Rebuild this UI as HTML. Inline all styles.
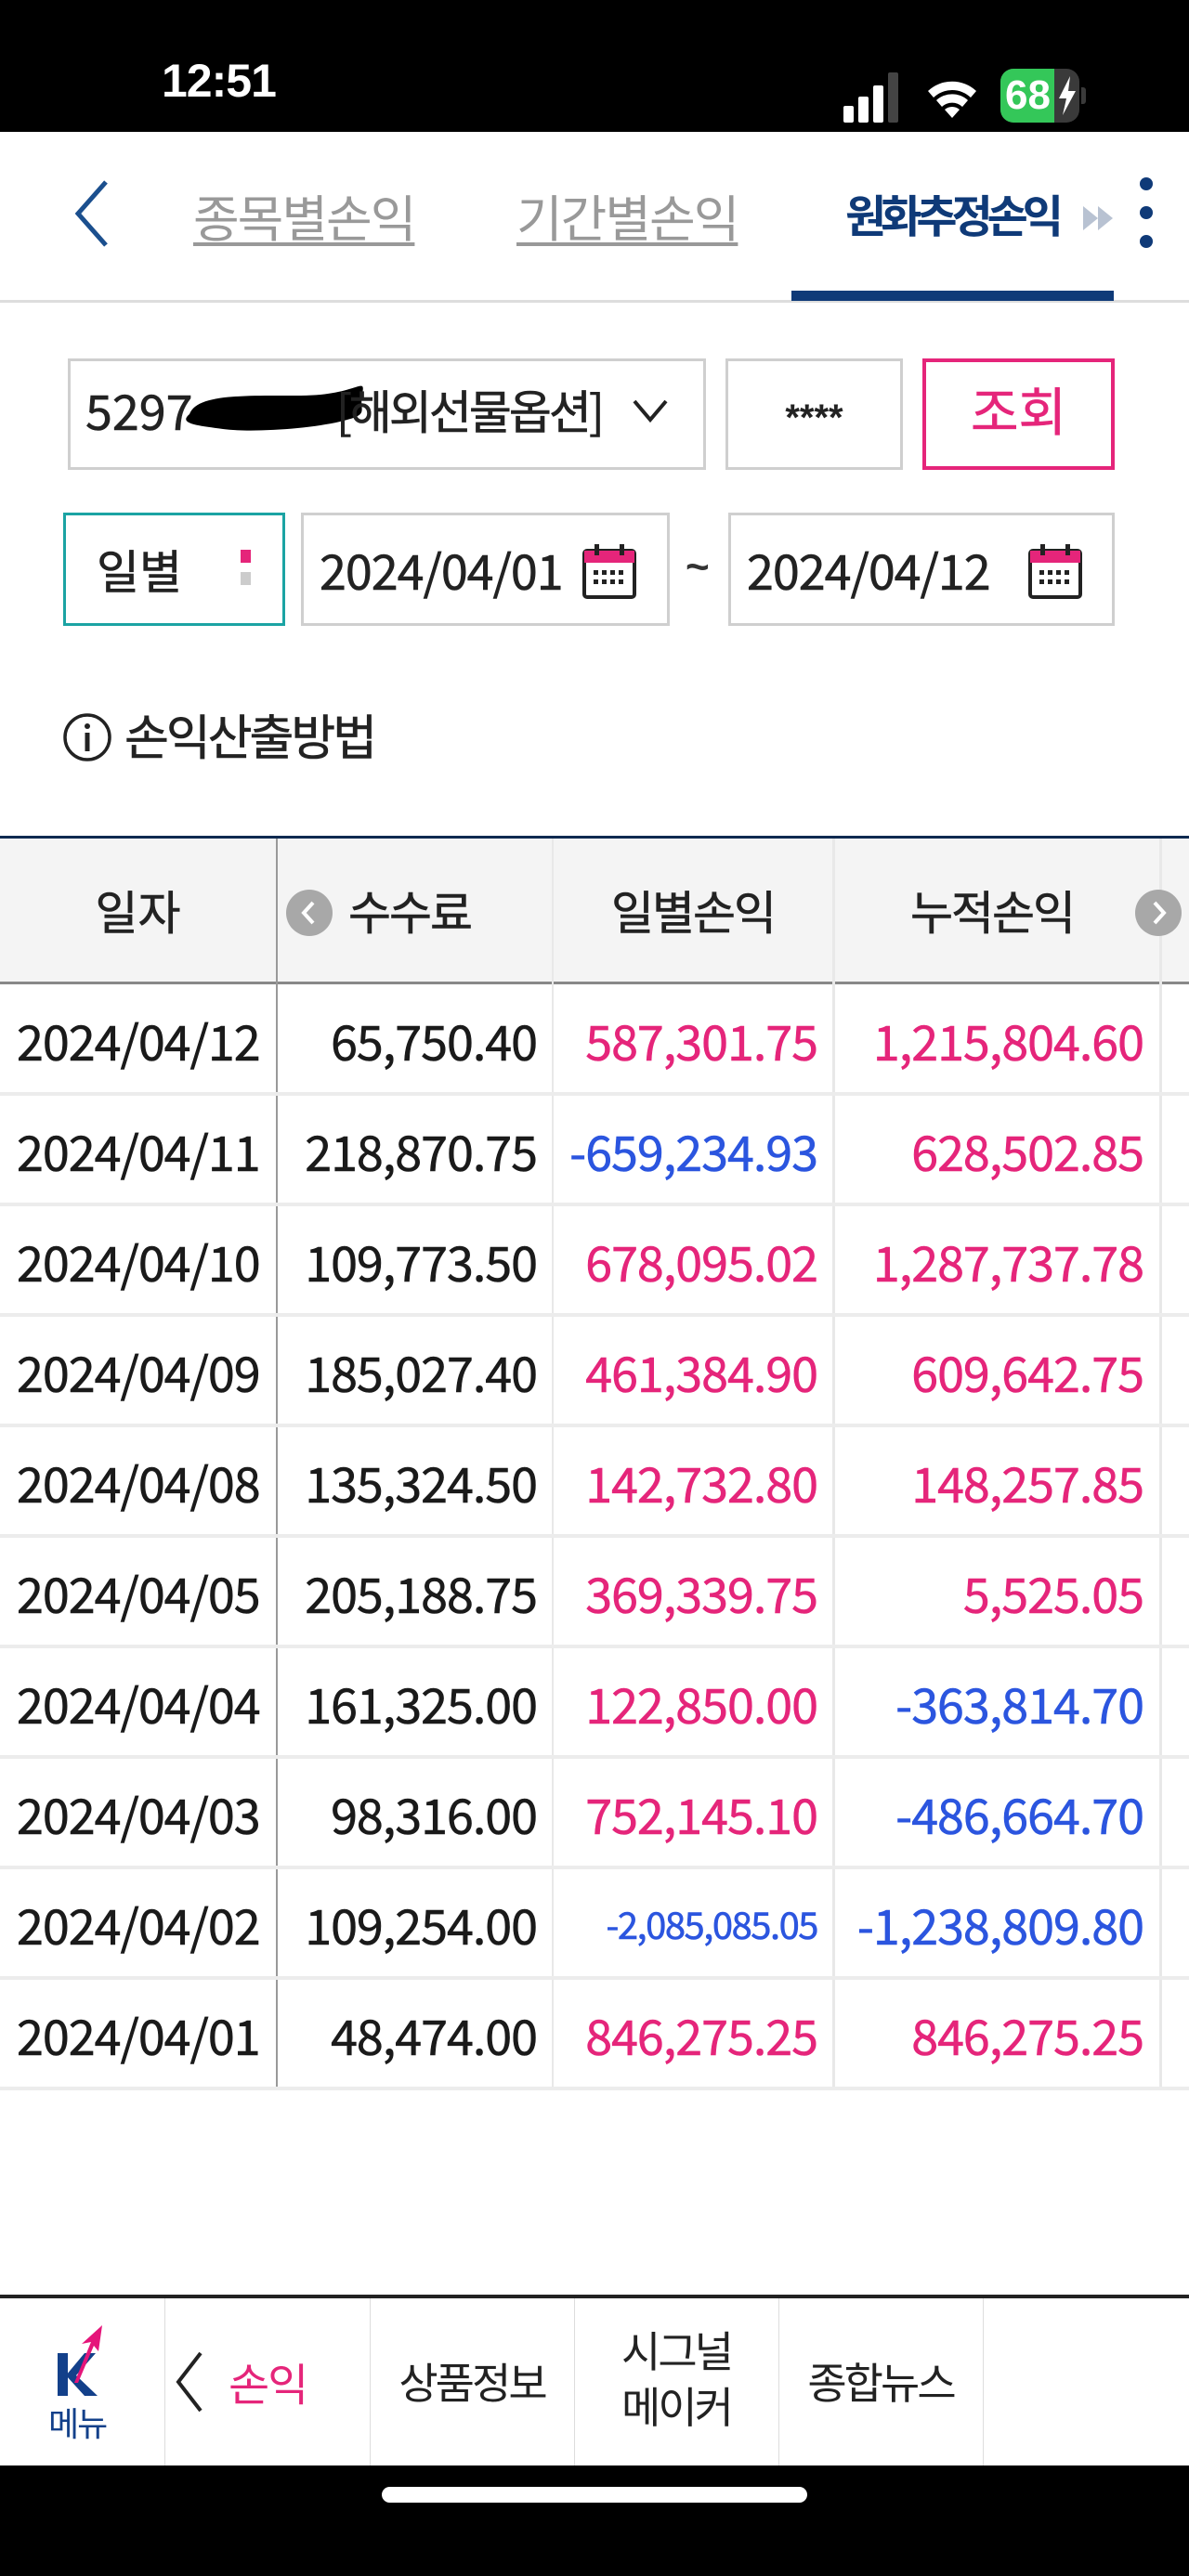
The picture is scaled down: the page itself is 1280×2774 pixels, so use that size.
<!DOCTYPE html>
<html><head><meta charset="utf-8">
<style>
*{margin:0;padding:0;box-sizing:border-box}
body{width:1280px;height:2774px;position:relative;background:#fff;font-family:"Liberation Sans","Noto Sans CJK KR",sans-serif;overflow:hidden}
.a{position:absolute}
.k{font-family:"Noto Sans CJK KR",sans-serif}
.box{position:absolute;border:3px solid #cfcfcf;background:#fff}
.t{position:absolute;font-family:"Noto Sans CJK KR",sans-serif;font-size:52px;line-height:119px;height:119px;white-space:nowrap;-webkit-text-stroke:0.6px currentColor}
.p{color:#e5257a}.b{color:#2b55df}.d{color:#1a1a1a}
</style></head><body>
<!-- status bar -->
<div class="a" style="left:0;top:0;width:1280px;height:142px;background:#000"></div>
<div class="a" style="left:174px;top:58px;color:#fff;font-size:50px;font-weight:bold;letter-spacing:-1px">12:51</div>
<div class="a" style="left:908px;top:132px;width:11px;height:18px;background:#fff;border-radius:2px;top:114px"></div>
<div class="a" style="left:924px;top:104px;width:11px;height:28px;background:#fff;border-radius:2px"></div>
<div class="a" style="left:940px;top:92px;width:11px;height:40px;background:#fff;border-radius:2px"></div>
<div class="a" style="left:956px;top:78px;width:11px;height:54px;background:#444;border-radius:2px"></div>
<svg class="a" style="left:995px;top:76px" width="60" height="58" viewBox="0 0 60 58"><path d="M4 22a38 38 0 0 1 52 0l-6 7a29 29 0 0 0-40 0z M13 32a25 25 0 0 1 34 0l-6 7a16 16 0 0 0-22 0z M22 42a12 12 0 0 1 16 0l-8 9z" fill="#fff"/></svg>
<div class="a" style="left:1077px;top:74px;width:85px;height:58px;background:#3a3a3a;border-radius:14px;overflow:hidden"><div style="width:58px;height:58px;background:#34c759"></div></div>
<div class="a" style="left:1082px;top:74px;color:#fff;font-size:44px;font-weight:bold;line-height:58px">68</div>
<svg class="a" style="left:1138px;top:82px" width="22" height="42" viewBox="0 0 22 42"><path d="M14 0L2 24h8L6 42 20 16h-8z" fill="#fff"/></svg>
<div class="a" style="left:1164px;top:94px;width:5px;height:18px;background:#3a3a3a;border-radius:0 3px 3px 0"></div>

<!-- tabs -->
<svg class="a" style="left:76px;top:192px" width="44" height="76" viewBox="0 0 44 76"><path d="M38 4L8 38l30 34" fill="none" stroke="#1b4f8e" stroke-width="5"/></svg>
<div class="a k" style="left:208px;top:192px;font-size:54px;color:#999;text-decoration:underline;text-decoration-thickness:4px;text-underline-offset:6px;letter-spacing:-2px">종목별손익</div>
<div class="a k" style="left:556px;top:192px;font-size:54px;color:#999;text-decoration:underline;text-decoration-thickness:4px;text-underline-offset:6px;letter-spacing:-2px">기간별손익</div>
<div class="a k" style="left:910px;top:194px;font-size:48px;color:#0f3a78;font-weight:bold;letter-spacing:-6px">원화추정손익</div>
<svg class="a" style="left:1166px;top:220px" width="34" height="30" viewBox="0 0 34 30"><path d="M0 2l16 13L0 28z M16 2l16 13-16 13z" fill="#b8c2d2"/></svg>
<div class="a" style="left:1227px;top:191px;width:14px;height:14px;border-radius:7px;background:#0f3a78"></div>
<div class="a" style="left:1227px;top:222px;width:14px;height:14px;border-radius:7px;background:#0f3a78"></div>
<div class="a" style="left:1227px;top:253px;width:14px;height:14px;border-radius:7px;background:#0f3a78"></div>
<div class="a" style="left:0;top:323px;width:1280px;height:3px;background:#ddd"></div>
<div class="a" style="left:852px;top:313px;width:347px;height:11px;background:#0f3a78"></div>

<!-- row 1 -->
<div class="box" style="left:73px;top:386px;width:687px;height:120px"></div>
<div class="a k" style="left:92px;top:406px;font-size:52px;line-height:70px;color:#222;-webkit-text-stroke:0.6px #222">5297</div>
<svg class="a" style="left:198px;top:406px" width="210" height="80" viewBox="0 0 210 80"><path d="M6 40c8-22 60-20 120-20s70-22 66-2 10 22-24 30-96 12-126 8-48-6-36-16z" fill="#000"/></svg>
<div class="a k" style="left:362px;top:406px;font-size:50px;line-height:70px;color:#222;letter-spacing:-3px;-webkit-text-stroke:0.6px #222">[해외선물옵션]</div>
<svg class="a" style="left:680px;top:428px" width="40" height="30" viewBox="0 0 40 30"><path d="M3 4l17 20L37 4" fill="none" stroke="#222" stroke-width="4"/></svg>
<div class="box" style="left:781px;top:386px;width:191px;height:120px"></div>
<div class="a" style="left:781px;top:420px;width:191px;text-align:center;font-size:40px;color:#222;line-height:60px;font-weight:bold">****</div>
<div class="box" style="left:993px;top:386px;width:207px;height:120px;border:4px solid #e5257a"></div>
<div class="a k" style="left:993px;top:406px;width:207px;text-align:center;font-size:56px;line-height:70px;color:#e5257a;-webkit-text-stroke:0.6px #e5257a">조회</div>

<!-- row 2 -->
<div class="box" style="left:68px;top:552px;width:239px;height:122px;border:3px solid #1ba3a3"></div>
<div class="a k" style="left:104px;top:578px;font-size:50px;line-height:70px;color:#222;-webkit-text-stroke:0.6px #222">일별</div>
<div class="a" style="left:259px;top:592px;width:11px;height:14px;background:#e5257a"></div>
<div class="a" style="left:259px;top:616px;width:11px;height:14px;background:#ccc"></div>
<div class="box" style="left:324px;top:552px;width:397px;height:122px"></div>
<div class="a k" style="left:344px;top:578px;font-size:52px;line-height:70px;color:#222;letter-spacing:-1px;-webkit-text-stroke:0.6px #222">2024/04/01</div>
<svg class="a" style="left:626px;top:584px" width="60" height="62" viewBox="0 0 60 62"><rect x="3" y="9" width="54" height="50" rx="3" fill="#fff" stroke="#222" stroke-width="4"/><rect x="3" y="9" width="54" height="13" fill="#e5257a"/><rect x="14" y="2" width="5" height="12" fill="#222"/><rect x="41" y="2" width="5" height="12" fill="#222"/><g fill="#222"><rect x="13" y="30" width="5" height="5"/><rect x="22" y="30" width="5" height="5"/><rect x="31" y="30" width="5" height="5"/><rect x="40" y="30" width="5" height="5"/><rect x="13" y="40" width="5" height="5"/><rect x="22" y="40" width="5" height="5"/><rect x="31" y="40" width="5" height="5"/><rect x="40" y="40" width="5" height="5"/></g></svg>
<div class="a" style="left:738px;top:586px;font-size:44px;color:#333;font-weight:bold">~</div>
<div class="box" style="left:784px;top:552px;width:416px;height:122px"></div>
<div class="a k" style="left:804px;top:578px;font-size:52px;line-height:70px;color:#222;letter-spacing:-1px;-webkit-text-stroke:0.6px #222">2024/04/12</div>
<svg class="a" style="left:1106px;top:584px" width="60" height="62" viewBox="0 0 60 62"><rect x="3" y="9" width="54" height="50" rx="3" fill="#fff" stroke="#222" stroke-width="4"/><rect x="3" y="9" width="54" height="13" fill="#e5257a"/><rect x="14" y="2" width="5" height="12" fill="#222"/><rect x="41" y="2" width="5" height="12" fill="#222"/><g fill="#222"><rect x="13" y="30" width="5" height="5"/><rect x="22" y="30" width="5" height="5"/><rect x="31" y="30" width="5" height="5"/><rect x="40" y="30" width="5" height="5"/><rect x="13" y="40" width="5" height="5"/><rect x="22" y="40" width="5" height="5"/><rect x="31" y="40" width="5" height="5"/><rect x="40" y="40" width="5" height="5"/></g></svg>

<!-- info -->
<svg class="a" style="left:67px;top:767px" width="54" height="54" viewBox="0 0 54 54"><circle cx="27" cy="27" r="24" fill="none" stroke="#222" stroke-width="3.5"/><rect x="24.5" y="22" width="5" height="20" fill="#222"/><circle cx="27" cy="15" r="3" fill="#222"/></svg>
<div class="a k" style="left:134px;top:758px;font-size:52px;line-height:66px;color:#222;letter-spacing:-3px;-webkit-text-stroke:0.6px #222">손익산출방법</div>

<!-- table -->
<div class="a" style="left:0;top:900px;width:1280px;height:3px;background:#0f2a50"></div>
<div class="a" style="left:0;top:903px;width:1280px;height:155px;background:#f4f4f4"></div>
<div class="a" style="left:0;top:1057px;width:1280px;height:3px;background:#888"></div>
<div class="a" style="left:297px;top:903px;width:2px;height:1346px;background:#999"></div>
<div class="a" style="left:594px;top:903px;width:2px;height:1346px;background:#e8e8e8"></div>
<div class="a" style="left:896px;top:903px;width:3px;height:1346px;background:#e8e8e8"></div>
<div class="a" style="left:1248px;top:903px;width:3px;height:1346px;background:#e8e8e8"></div>
<div class="a k" style="left:0;top:903px;width:297px;height:155px;line-height:155px;text-align:center;font-size:50px;color:#222;-webkit-text-stroke:0.6px #222">일자</div>
<div class="a" style="left:308px;top:958px;width:50px;height:50px;border-radius:25px;background:#a8a8a8"></div>
<svg class="a" style="left:308px;top:958px" width="50" height="50" viewBox="0 0 50 50"><path d="M29 14L19 25l10 11" fill="none" stroke="#fff" stroke-width="4"/></svg>
<div class="a k" style="left:375px;top:903px;height:155px;line-height:155px;font-size:50px;color:#222;letter-spacing:-2px;-webkit-text-stroke:0.6px #222">수수료</div>
<div class="a k" style="left:596px;top:903px;width:300px;height:155px;line-height:155px;text-align:center;font-size:50px;color:#222;letter-spacing:-2px;-webkit-text-stroke:0.6px #222">일별손익</div>
<div class="a k" style="left:980px;top:903px;height:155px;line-height:155px;font-size:50px;color:#222;letter-spacing:-2px;-webkit-text-stroke:0.6px #222">누적손익</div>
<div class="a" style="left:1222px;top:958px;width:50px;height:50px;border-radius:25px;background:#a8a8a8"></div>
<svg class="a" style="left:1222px;top:958px" width="50" height="50" viewBox="0 0 50 50"><path d="M21 14l10 11-10 11" fill="none" stroke="#fff" stroke-width="4"/></svg>

<div id="rows"></div>
<script>
var d=[["2024/04/12","65,750.40","587,301.75","p","1,215,804.60","p"],
["2024/04/11","218,870.75","-659,234.93","b","628,502.85","p"],
["2024/04/10","109,773.50","678,095.02","p","1,287,737.78","p"],
["2024/04/09","185,027.40","461,384.90","p","609,642.75","p"],
["2024/04/08","135,324.50","142,732.80","p","148,257.85","p"],
["2024/04/05","205,188.75","369,339.75","p","5,525.05","p"],
["2024/04/04","161,325.00","122,850.00","p","-363,814.70","b"],
["2024/04/03","98,316.00","752,145.10","p","-486,664.70","b"],
["2024/04/02","109,254.00","-2,085,085.05","b","-1,238,809.80","b"],
["2024/04/01","48,474.00","846,275.25","p","846,275.25","p"]];
var h="";
for(var i=0;i<10;i++){var y=1060+i*119;var r=d[i];
h+='<div class="t d" style="left:18px;top:'+y+'px;letter-spacing:-1px">'+r[0]+'</div>';
h+='<div class="t d" style="right:702px;top:'+y+'px;letter-spacing:-1px">'+r[1]+'</div>';
h+='<div class="t '+r[3]+'" style="right:400px;top:'+y+'px;letter-spacing:-1px;'+(r[2].length>12?'font-size:40px;letter-spacing:-1.5px':'')+'">'+r[2]+'</div>';
h+='<div class="t '+r[5]+'" style="right:49px;top:'+y+'px;letter-spacing:-1px">'+r[4]+'</div>';
h+='<div class="a" style="left:0;top:'+(y+116)+'px;width:1280px;height:4px;background:#ececec"></div>';}
document.getElementById("rows").innerHTML=h;
</script>

<!-- bottom nav -->
<div class="a" style="left:0;top:2471px;width:1280px;height:4px;background:#222"></div>
<div class="a" style="left:0;top:2475px;width:1280px;height:180px;background:#fff"></div>
<div class="a" style="left:177px;top:2475px;width:1px;height:180px;background:#ddd"></div>
<div class="a" style="left:398px;top:2475px;width:1px;height:180px;background:#ddd"></div>
<div class="a" style="left:618px;top:2475px;width:1px;height:180px;background:#ddd"></div>
<div class="a" style="left:838px;top:2475px;width:1px;height:180px;background:#ddd"></div>
<div class="a" style="left:1058px;top:2475px;width:1px;height:180px;background:#ddd"></div>
<svg class="a" style="left:58px;top:2500px" width="60" height="82" viewBox="0 0 60 82"><path d="M4 46h11v46H4z M13 70l20-24h12L24 70l23 22H33z" fill="#13408a" transform="translate(0,-12)"/><path d="M22 66L40 22l-10 2 22-20-4 28-5-6-17 40z" fill="#e5157a"/></svg>
<div class="a k" style="left:52px;top:2588px;font-size:36px;line-height:40px;color:#13408a;letter-spacing:-2px">메뉴</div>
<svg class="a" style="left:186px;top:2530px" width="34" height="70" viewBox="0 0 34 70"><path d="M30 4L6 35l24 31" fill="none" stroke="#222" stroke-width="4"/></svg>
<div class="a k" style="left:246px;top:2536px;font-size:48px;line-height:56px;color:#e5257a;letter-spacing:-2px">손익</div>
<div class="a k" style="left:398px;top:2536px;width:220px;text-align:center;font-size:46px;line-height:56px;color:#222;letter-spacing:-3px">상품정보</div>
<div class="a k" style="left:618px;top:2500px;width:220px;text-align:center;font-size:46px;line-height:60px;color:#222;letter-spacing:-3px">시그널<br>메이커</div>
<div class="a k" style="left:838px;top:2536px;width:220px;text-align:center;font-size:46px;line-height:56px;color:#222;letter-spacing:-3px">종합뉴스</div>
<div class="a" style="left:0;top:2655px;width:1280px;height:119px;background:#000"></div>
<div class="a" style="left:411px;top:2678px;width:458px;height:17px;border-radius:9px;background:#fff"></div>
</body></html>
